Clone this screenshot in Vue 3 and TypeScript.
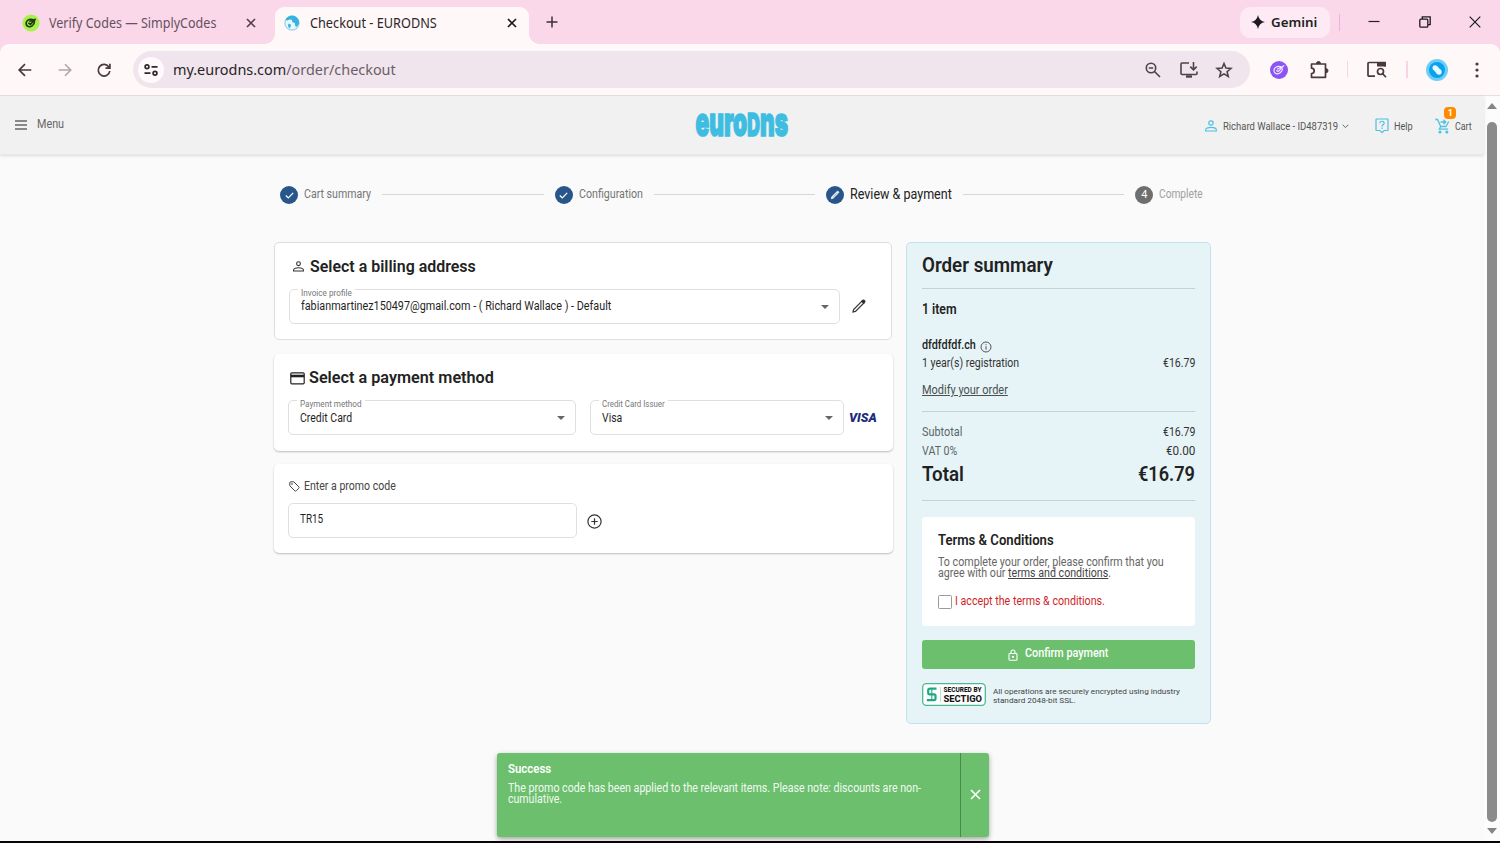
<script setup lang="ts">
import { ref } from 'vue'

// Condenses a line of text to the given width in pixels.
const vFit = {
  mounted(el: HTMLElement, binding: { value: number }) {
    const natural = el.offsetWidth
    el.style.transform = `scaleX(${binding.value / natural})`
    el.style.marginRight = `${binding.value - natural}px`
  },
}

const steps = [
  { label: 'Cart summary', width: 67, kind: 'done' },
  { label: 'Configuration', width: 64, kind: 'done' },
  { label: 'Review & payment', width: 102, kind: 'current' },
  { label: 'Complete', width: 44, kind: 'todo' },
]
const accepted = ref(false)
</script>

<template>
  <div class="window">
    <div class="tabstrip">
      <div class="tab first">
        <svg class="fav" width="18" height="18" viewBox="0 0 18 18">
          <circle cx="9" cy="9" r="8.6" fill="#a6f24a" />
          <g fill="none" stroke="#213a12" stroke-width="1.7" stroke-linecap="round">
            <path d="M10.5 5.6C7 4.6 4 6.600 4.100 9.600c.1 3 3.600 4 6 2.300 1.800-1.200 2.400-3 2.300-4.300" />
            <path d="M6.800 9.300l1.600 1 4.800-5M8 7.300l4-1.600" />
          </g>
        </svg>
        <span class="t title" v-fit="167">Verify Codes — SimplyCodes</span>
        <svg class="close" width="10" height="10" viewBox="0 0 10 10"><path d="M1 1l8 8M9 1l-8 8" stroke="#513b48" stroke-width="1.6" /></svg>
      </div>
      <div class="tab active">
        <svg class="fav" width="16" height="16" viewBox="0 0 16 16">
          <circle cx="8" cy="8" r="7.100" fill="#e9f7fc" stroke="#55bfe3" stroke-width=".8" />
          <path d="M1.500 5C3 1.500 6 .4 9 .8c4 .6 6.500 4 6 7.700l-2 3.200-1.700-.4-.5-3.200-2.400-.8-.6-2.600-2.400-.3-2 1.200z" fill="#36b2dd" />
          <path d="M4.500 8.500l2.600 1.300-.6 2.200-1.300 1.600-1.200-2.600z" fill="#36b2dd" />
        </svg>
        <span class="t title dark" v-fit="127">Checkout - EURODNS</span>
        <svg class="close" width="10" height="10" viewBox="0 0 10 10"><path d="M1 1l8 8M9 1l-8 8" stroke="#1f1a1d" stroke-width="1.700" /></svg>
      </div>
      <svg class="plus" width="12" height="12" viewBox="0 0 12 12"><path d="M6 .5v11M.5 6h11" stroke="#3c3038" stroke-width="1.500" /></svg>
      <div class="gemini">
        <svg width="14" height="14" viewBox="0 0 14 14"><path d="M7 0c.8 4 3 6.200 7 7-4 .8-6.200 3-7 7-.8-4-3-6.200-7-7 4-.8 6.200-3 7-7z" fill="#1c1b1f" /></svg>
        <span class="t" v-fit="46">Gemini</span>
      </div>
      <i class="sep"></i>
      <div class="controls">
        <svg width="12" height="12" viewBox="0 0 12 12"><path d="M.5 5.500h11" stroke="#222" stroke-width="1.200" /></svg>
        <svg width="12" height="12" viewBox="0 0 12 12" fill="none" stroke="#1b1b1b" stroke-width="1.300"><rect x=".8" y="3.200" width="8" height="8" rx="1" /><path d="M3.300 3V.8h7.900v7.900H9" /></svg>
        <svg width="12" height="12" viewBox="0 0 12 12"><path d="M.7.700l10.600 10.600M11.300.700L.7 11.300" stroke="#1b1b1b" stroke-width="1.200" /></svg>
      </div>
    </div>

    <div class="toolbar">
      <div class="nav">
        <svg width="14" height="14" viewBox="0 0 14 14" fill="none" stroke="#48383f" stroke-width="1.700"><path d="M13.300 7H1.500M7 1.200L1.200 7 7 12.800" /></svg>
        <svg width="14" height="14" viewBox="0 0 14 14" fill="none" stroke="#b0a6aa" stroke-width="1.600"><path d="M.7 7h11.800M7 1.200L12.800 7 7 12.800" /></svg>
        <svg width="14" height="14" viewBox="0 0 14 14" fill="none" stroke="#48383f" stroke-width="1.700"><path d="M12 4.200A5.800 5.800 0 1 0 12.800 8M12.900.8v4.400H8.500" /></svg>
      </div>
      <div class="omnibox">
        <span class="site">
          <svg width="14" height="12" viewBox="0 0 14 12" fill="none" stroke="#2f282c" stroke-width="1.700"><circle cx="3" cy="2.800" r="1.900" /><path d="M7.500 2.800h6M.5 9.200h6" /><circle cx="11" cy="9.200" r="1.900" /></svg>
        </span>
        <span class="t url" v-fit="223">my.eurodns.com<span class="path">/order/checkout</span></span>
        <div class="omni-icons">
          <svg width="16" height="16" viewBox="0 0 16 16" fill="none" stroke="#514149" stroke-width="1.600"><circle cx="6" cy="6" r="4.700" /><path d="M9.500 9.500l5.500 5.500M3.800 6h4.400" /></svg>
          <svg width="18" height="16" viewBox="0 0 18 16" fill="none" stroke="#514149" stroke-width="1.600"><path d="M9 1H2a1 1 0 0 0-1 1v9.500a1 1 0 0 0 1 1h14a1 1 0 0 0 1-1V9.500M13.500 0v7.500M10.300 4.600l3.200 3.200 3.200-3.200" /><path d="M6 14.500h6" stroke-width="2.400" /></svg>
          <svg width="16" height="16" viewBox="0 0 16 16" fill="none" stroke="#514149" stroke-width="1.600"><path d="M8 1.500l1.900 4.600 5 .4-3.800 3.200 1.200 4.800L8 11.900l-4.300 2.600 1.200-4.800L1.100 6.500l5-.4z" /></svg>
        </div>
      </div>
      <svg class="ext" width="18" height="18" viewBox="0 0 18 18"><circle cx="9" cy="9" r="9" fill="#8c55f3" /><g fill="none" stroke="#f1e8ff" stroke-width="1.200" stroke-linecap="round"><path d="M10.500 5.600C7 4.600 3.700 6.800 3.900 9.800c.2 3 4 3.800 6.300 2 1.700-1.200 2.300-2.600 2.200-4" /><path d="M6.600 9.600l1.800.9 5.400-5.800M7.500 8l4.500-2.300" /></g></svg>
      <svg class="puzzle" width="18" height="18" viewBox="0 0 18 18"><path d="M1.500 3h14v13.300h-14v-3.800a2.700 2.700 0 0 0 0-5.400z" fill="none" stroke="#48383f" stroke-width="1.700" stroke-linejoin="round" /><path d="M6.500 2.500a2 2 0 0 1 4 0zM16 7.700a2 2 0 0 1 0 4z" fill="#48383f" stroke="#48383f" /></svg>
      <i class="sep light s1"></i>
      <svg class="panel" width="20" height="17" viewBox="0 0 20 17"><path d="M8 15.200H2a1 1 0 0 1-1-1V2.500a1 1 0 0 1 1-1h16v4" fill="none" stroke="#48383f" stroke-width="1.700" /><path d="M10 1.200h9v4.300h-9z" fill="#48383f" /><circle cx="13.500" cy="10.500" r="3" fill="none" stroke="#48383f" stroke-width="1.700" /><path d="M15.700 12.700l3.300 3.600" stroke="#48383f" stroke-width="1.700" /></svg>
      <i class="sep light s2"></i>
      <svg class="avatar" width="22" height="22" viewBox="0 0 22 22"><circle cx="11" cy="11" r="11" fill="#70cdf8" /><circle cx="11" cy="11" r="8" fill="#08a2ef" /><g fill="#e7f8ff"><circle cx="9" cy="8.800" r="2.500" /><circle cx="13" cy="13" r="2.700" /><path d="M7.200 10.500l3.800 4.300 4-3.600-4-4.300z" /></g></svg>
      <svg class="dots" width="4" height="16" viewBox="0 0 4 16" fill="#48383f"><circle cx="2" cy="2" r="1.600" /><circle cx="2" cy="8" r="1.600" /><circle cx="2" cy="14" r="1.600" /></svg>
    </div>

    <div class="viewport">
      <div class="page">
        <header class="site-header">
          <div class="menu">
            <svg width="12" height="10" viewBox="0 0 12 10"><path d="M0 1h12M0 5h12M0 9h12" stroke="#666" stroke-width="1.300" /></svg>
            <span class="t" v-fit="27">Menu</span>
          </div>
          <svg class="logo" width="96" height="28" viewBox="0 0 96 28">
            <text class="logo-text" x="1.500" y="24.500" textLength="92.500" lengthAdjust="spacingAndGlyphs">euro<tspan class="cap">D</tspan>ns</text>
          </svg>
          <div class="account">
            <svg width="12" height="12" viewBox="0 0 12 12" fill="none" stroke="#4cc0e3" stroke-width="1.200"><circle cx="6" cy="3" r="2.200" /><path d="M.7 11V9.700C.7 8 4 7.300 6 7.300s5.300.7 5.300 2.400V11z" /></svg>
            <span class="t who" v-fit="115">Richard Wallace - ID487319</span>
            <svg class="chev" width="7" height="5" viewBox="0 0 7 5"><path d="M.7.8l2.800 2.800L6.300.8" fill="none" stroke="#666" /></svg>
            <svg class="help-icon" width="14" height="16" viewBox="0 0 14 16" fill="none" stroke="#4cc0e3" stroke-width="1.200"><path d="M1.500 1h11q.5 0 .5.500v10.500q0 .5-.5.500H9L7 14.700 5 12.500H1.500Q1 12.500 1 12V1.500Q1 1 1.500 1z" /><path d="M4.900 5.200c0-2.600 4.200-2.600 4.200 0 0 1.500-2.100 1.700-2.100 3.300M7 9.600v1.400" /></svg>
            <span class="t help" v-fit="19">Help</span>
            <div class="cart">
              <svg width="15" height="16" viewBox="0 0 15 16" fill="none" stroke="#4cc0e3" stroke-width="1.300"><path d="M.3 1.500h2.200l3.200 7h5.200l2.800-5M5.700 8.500l-1.300 2.700h8.700M5.500 4h5M8.500 1.800L10.700 4 8.500 6.200" /><circle cx="5" cy="14" r=".9" fill="#4cc0e3" /><circle cx="11.800" cy="14" r=".9" fill="#4cc0e3" /></svg>
              <span class="badge">1</span>
            </div>
            <span class="t" v-fit="17">Cart</span>
          </div>
        </header>

        <div class="stepper">
          <template v-for="(step, i) in steps" :key="step.label">
            <i v-if="i > 0" class="rail"></i>
            <div class="step" :class="step.kind">
              <span class="dot">
                <svg v-if="step.kind === 'done'" width="9" height="7" viewBox="0 0 9 7"><path d="M.8 3.500l2.500 2.400L8.200.9" fill="none" stroke="#fff" stroke-width="1.300" /></svg>
                <svg v-else-if="step.kind === 'current'" width="10" height="10" viewBox="0 0 10 10"><path d="M1.200 8.800l.5-2L7 1.500a1 1 0 0 1 1.500 1.500L3.200 8.300z" fill="#e8f1fa" stroke="#fff" stroke-width=".6" /><path d="M3 7.200l4-4" stroke="#7b9cba" stroke-width=".6" /></svg>
                <span v-else>4</span>
              </span>
              <span class="t" v-fit="step.width">{{ step.label }}</span>
            </div>
          </template>
        </div>

        <main class="columns">
          <div class="forms">
            <section class="card outlined">
              <h2>
                <svg class="i-person" width="11" height="11" viewBox="0 0 11 11" fill="none" stroke="#333" stroke-width="1.100"><circle cx="5.500" cy="2.700" r="1.900" /><path d="M.6 10V9c0-1.500 3-2.300 4.900-2.300s4.900.8 4.900 2.300v1z" /></svg>
                <span class="t" v-fit="166">Select a billing address</span>
              </h2>
              <div class="row">
                <div class="field invoice">
                  <label><span class="t" v-fit="51">Invoice profile</span></label>
                  <span class="t" v-fit="310">fabianmartinez150497@gmail.com - ( Richard Wallace ) - Default</span>
                  <i class="caret"></i>
                </div>
                <svg class="pencil" width="14" height="14" viewBox="0 0 14 14" fill="none" stroke="#333" stroke-width="1.200"><path d="M1 13l.6-2.500L10 2.100l1.900 1.900-8.400 8.400z" /><path d="M9.800 2.300l1-1q.6-.5 1.200 0l.7.7q.5.600 0 1.200l-1 1z" fill="#222" /></svg>
              </div>
            </section>

            <section class="card raised method">
              <h2>
                <svg class="i-card" width="15" height="13" viewBox="0 0 15 13"><rect x=".8" y=".8" width="13.400" height="11" rx="1" fill="none" stroke="#222" stroke-width="1.200" /><path d="M.8 4h13.400" stroke="#222" stroke-width="2.600" /></svg>
                <span class="t" v-fit="185">Select a payment method</span>
              </h2>
              <div class="row">
                <div class="field pay">
                  <label><span class="t" v-fit="62">Payment method</span></label>
                  <span class="t" v-fit="52">Credit Card</span>
                  <i class="caret"></i>
                </div>
                <div class="field issuer">
                  <label><span class="t" v-fit="63">Credit Card Issuer</span></label>
                  <span class="t" v-fit="20">Visa</span>
                  <i class="caret"></i>
                </div>
                <span class="t visa" v-fit="28">VISA</span>
              </div>
            </section>

            <section class="card raised promo">
              <div class="promo-title">
                <svg width="11" height="11" viewBox="0 0 11 11" fill="none" stroke="#444"><path d="M.8 1.800Q.8.800 1.800.8h3l5 5q.7.700 0 1.400L7.200 9.800q-.7.700-1.400 0l-5-5z" /><circle cx="3" cy="3" r=".4" /></svg>
                <span class="t" v-fit="92">Enter a promo code</span>
              </div>
              <div class="row">
                <div class="field code"><span class="t" v-fit="23">TR15</span></div>
                <svg class="add" width="15" height="15" viewBox="0 0 15 15" fill="none" stroke="#333" stroke-width="1.200"><circle cx="7.500" cy="7.500" r="6.600" /><path d="M7.500 4.300v6.400M4.300 7.500h6.400" /></svg>
              </div>
            </section>
          </div>

          <aside class="summary">
            <h1><span class="t" v-fit="131">Order summary</span></h1>
            <hr />
            <div class="items"><span class="t" v-fit="35">1 item</span></div>
            <div class="domain">
              <span class="t" v-fit="54">dfdfdfdf.ch</span>
              <svg width="12" height="12" viewBox="0 0 12 12" fill="none" stroke="#555"><circle cx="6" cy="6" r="5" /><path d="M6 5.200v3.500M6 3.200v1" /></svg>
            </div>
            <div class="line reg"><span class="t" v-fit="97">1 year(s) registration</span><span class="t" v-fit="32">€16.79</span></div>
            <div class="line modify"><a class="t" v-fit="86">Modify your order</a></div>
            <hr class="h2" />
            <div class="line sub"><span class="t" v-fit="40">Subtotal</span><span class="t strong" v-fit="32">€16.79</span></div>
            <div class="line vat"><span class="t" v-fit="35">VAT 0%</span><span class="t strong" v-fit="29">€0.00</span></div>
            <div class="line total"><span class="t" v-fit="42">Total</span><span class="t" v-fit="57">€16.79</span></div>
            <hr class="h3" />
            <div class="terms">
              <h3><span class="t" v-fit="116">Terms &amp; Conditions</span></h3>
              <p><span class="t" v-fit="226">To complete your order, please confirm that you</span></p>
              <p><span class="t" v-fit="173">agree with our <a>terms and conditions</a>.</span></p>
              <label class="accept">
                <input v-model="accepted" type="checkbox" />
                <span class="t" v-fit="150">I accept the terms &amp; conditions.</span>
              </label>
            </div>
            <button class="confirm">
              <svg width="10" height="12" viewBox="0 0 10 12" fill="none" stroke="#fff" stroke-width="1.100"><rect x="1" y="4.500" width="8" height="6.700" rx=".8" /><path d="M3 4.500V3a2 2 0 0 1 4 0v1.500" /><circle cx="5" cy="7.800" r=".6" fill="#fff" /></svg>
              <span class="t" v-fit="83">Confirm payment</span>
            </button>
            <div class="secure">
              <svg width="64" height="23" viewBox="0 0 64 23">
                <rect x=".7" y=".7" width="62.600" height="21.600" rx="3.500" fill="#fff" stroke="#4bb98f" stroke-width="1.300" />
                <path d="M14.500 5.700H8q-1.800 0-1.800 1.800v2.300q0 1.600 1.600 1.600h4.300q1.400 0 1.400 1.400v2.800q0 1.500-1.500 1.500H4.900" fill="none" stroke="#1cab7e" stroke-width="2.200" />
                <path d="M9.800 5.700v5.700M9.800 11.400v5.700" fill="none" stroke="#1cab7e" stroke-width="1.100" />
                <path d="M18.500 4v15" stroke="#b9e5d5" />
                <g class="seal"><text x="21.500" y="9.200" font-size="6.600" textLength="38" lengthAdjust="spacingAndGlyphs">SECURED BY</text><text x="21.500" y="18.700" font-size="9.500" textLength="38.500" lengthAdjust="spacingAndGlyphs">SECTIGO</text></g>
              </svg>
              <div class="fine">
                <p><span class="t" v-fit="187">All operations are securely encrypted using industry</span></p>
                <p><span class="t" v-fit="83">standard 2048-bit SSL.</span></p>
              </div>
            </div>
          </aside>
        </main>

        <div class="toast">
          <div class="msg">
            <h4><span class="t" v-fit="43">Success</span></h4>
            <p><span class="t" v-fit="413">The promo code has been applied to the relevant items. Please note: discounts are non-</span></p>
            <p><span class="t" v-fit="54">cumulative.</span></p>
          </div>
          <div class="dismiss">
            <svg width="11" height="11" viewBox="0 0 11 11"><path d="M1 1l9 9M10 1l-9 9" stroke="#fff" stroke-width="1.600" /></svg>
          </div>
        </div>
      </div>
      <div class="scrollbar">
        <i class="up"></i>
        <i class="thumb"></i>
        <i class="down"></i>
      </div>
    </div>
    <div class="edge"></div>
  </div>
</template>

<style>
body {
  margin: 0;
  overflow: hidden;
}
</style>

<style scoped>
.window {
  width: 1500px;
  height: 843px;
  display: flex;
  flex-direction: column;
  background: #fad8e9;
  font-family: Roboto, "Liberation Sans", sans-serif;
  color: #222;
  overflow: hidden;
}
svg { display: block; flex: none; overflow: visible; }
h1, h2, h3, h4, p { margin: 0; font-weight: 400; }
.t {
  display: inline-block;
  white-space: nowrap;
  transform-origin: 0 50%;
  flex: none;
}

/* Tab strip */
.tabstrip {
  height: 44px;
  flex: none;
  display: flex;
  align-items: center;
  font-family: "Noto Sans", "Open Sans", sans-serif;
}
.tab { display: flex; align-items: center; height: 37px; margin-top: 7px; padding-bottom: 5px; box-sizing: border-box; }
.first { width: 275px; padding-left: 22px; }
.first .title { margin-left: 9px; }
.first .close { margin-left: auto; margin-right: 19px; }
.title { font-size: 13.5px; line-height: 20px; color: #66505d; }
.title.dark { color: #2c2529; }
.active {
  position: relative;
  width: 254px;
  padding-left: 10px;
  background: #fff8f8;
  border-radius: 9px 9px 0 0;
}
.active::before, .active::after {
  content: "";
  position: absolute;
  bottom: 0;
  width: 10px;
  height: 10px;
}
.active::before { left: -10px; background: radial-gradient(circle at 0 0, transparent 9.5px, #fff8f8 10px); }
.active::after { right: -10px; background: radial-gradient(circle at 100% 0, transparent 9.5px, #fff8f8 10px); }
.active .fav { margin-left: -1px; }
.active .title { margin-left: 10px; }
.active .close { margin-left: auto; margin-right: 12px; }
.plus { margin-left: 17px; }
.gemini {
  display: flex;
  align-items: center;
  gap: 6px;
  width: 90px;
  height: 31px;
  margin-left: auto;
  padding-left: 11px;
  box-sizing: border-box;
  border-radius: 10px;
  background: #fdeaf4;
  font-size: 13px;
  font-weight: 600;
}
.sep { width: 1.5px; height: 17px; margin-left: 9px; background: #f3b0dc; }
.controls { display: flex; gap: 38.500px; margin: 0 19px 0 28px; }

/* Toolbar */
.toolbar {
  height: 51px;
  flex: none;
  display: flex;
  align-items: center;
  background: #fff8f8;
  border-radius: 9px 9px 0 0;
  border-bottom: 1px solid #eadfe0;
}
.nav { display: flex; gap: 25.500px; margin-left: 18px; width: 115px; }
.omnibox {
  display: flex;
  align-items: center;
  width: 1117px;
  height: 37px;
  border-radius: 19px;
  background: #f0e5ed;
}
.site {
  display: grid;
  place-items: center;
  width: 26px;
  height: 26px;
  margin-left: 5px;
  border-radius: 50%;
  background: #fff9fb;
}
.url { margin: -2px 0 0 9px; font: 15px/20px "Noto Sans", "Open Sans", sans-serif; color: #2a2327; }
.path { color: #6b5d65; }
.omni-icons { display: flex; align-items: center; gap: 18.500px; margin-left: auto; margin-right: 18px; }
.ext { margin-left: 19.500px; }
.puzzle { margin-left: 22px; }
.light { background: #fbd3e6; }
.s1 { margin-left: 19px; }
.panel { margin-left: 19px; }
.s2 { margin-left: 19px; }
.avatar { margin-left: 18px; }
.dots { margin-left: 27px; }

/* Page */
.viewport { flex: 1; display: flex; min-height: 0; }
.page { position: relative; width: 1484px; background: #fafafa; }
.site-header {
  display: grid;
  grid-template-columns: 1fr auto 1fr;
  align-items: center;
  height: 58px;
  background: #f1f1f1;
  border-bottom: 1px solid #e8e8e8;
  box-shadow: 0 1px 3px #0000001f;
}
.menu { display: flex; align-items: center; gap: 10px; padding-left: 15px; font-size: 12px; line-height: 16px; color: #666; }
.menu .t { margin-top: -3px; }
.logo-text { font-family: Inter, sans-serif; font-size: 40px; font-weight: 900; fill: #3fbde0; stroke: #3fbde0; stroke-width: 1.600; }
.cap { font-size: 31px; }
.account { display: flex; align-items: center; justify-content: flex-end; padding: 2px 12px 0 0; font-size: 11.500px; line-height: 16px; color: #555; }
.who { margin-left: 6px; }
.chev { margin-left: 4px; }
.help-icon { margin-left: 26px; }
.help { margin-left: 5px; }
.cart { position: relative; margin: 0 5px 0 23px; }
.badge {
  position: absolute;
  left: 9px;
  top: -11px;
  width: 12px;
  height: 12px;
  border-radius: 4px;
  background: #ff8a00;
  color: #fff;
  font-size: 9px;
  font-weight: 700;
  line-height: 12px;
  text-align: center;
}

/* Stepper */
.stepper { display: flex; align-items: center; height: 20px; margin: 30px 281px 0 280px; }
.step { display: flex; align-items: center; flex: none; font-size: 12.500px; line-height: 16px; color: #757575; }
.step .t { margin: -2px 0 0 6px; }
.step.current { font-size: 14px; color: #222; }
.step.todo { color: #a0a0a0; }
.dot {
  display: grid;
  place-items: center;
  width: 18px;
  height: 18px;
  border-radius: 50%;
  background: #28568a;
}
.todo .dot { background: #6e6e6e; color: #fff; font-size: 11px; }
.rail { flex: 1; height: 1px; margin: -2px 11px 0; background: #d6d6d6; }

.columns { display: flex; align-items: flex-start; gap: 14px; margin: 37px 0 0 274px; }
.forms { width: 618px; }
.card { box-sizing: border-box; background: #fff; border-radius: 5px; }
.outlined { height: 98px; padding: 13px 14px; border: 1px solid #dedede; }
.raised { width: 619px; padding: 13px 14px; box-shadow: 0 1px 2px #00000040; }
.method { height: 97px; margin-top: 14px; }
.promo { height: 89px; margin-top: 13px; padding-top: 14px; }
h2 { display: flex; align-items: center; height: 20px; line-height: 20px; font-size: 17px; font-weight: 600; }
.i-person { margin: 0 6px 0 4px; }
.i-card { margin: 2px 4px 0 2px; }
.row { display: flex; align-items: center; margin-top: 13px; }
.field {
  position: relative;
  box-sizing: border-box;
  height: 35px;
  flex: none;
  padding: 8px 11px 0;
  border: 1px solid #dfdfdf;
  border-radius: 5px;
  font-size: 12.500px;
  line-height: 16px;
  color: #1f1f1f;
}
.field label {
  position: absolute;
  top: -2.500px;
  left: 8px;
  padding: 0 3px;
  display: flex;
  background: #fff;
  font-size: 8.500px;
  line-height: 10px;
  color: #777;
}
.invoice { width: 551px; }
.method .field { padding-top: 9px; }
.pay { width: 288px; margin-right: 14px; }
.issuer { width: 254px; }
.caret {
  position: absolute;
  right: 10.500px;
  top: 15px;
  border: 4px solid transparent;
  border-top-color: #666;
  border-bottom: 0;
}
.pencil { margin: -2px 0 0 12px; }
.visa { margin-left: 5px; font-size: 13.500px; line-height: 16px; font-weight: 900; font-style: italic; color: #1a2c7c; }
.method .visa { margin-top: -2px; }
.promo-title { display: flex; align-items: center; gap: 4px; height: 16px; padding-left: 1px; font-size: 12.500px; line-height: 16px; color: #444; }
.promo .row { margin-top: 9px; }
.code { width: 289px; padding-top: 7px; }
.add { margin: 1px 0 0 10px; }

/* Order summary */
.summary {
  box-sizing: border-box;
  width: 305px;
  height: 482px;
  padding: 10px 15px 0;
  border: 1px solid #bfe2ee;
  border-radius: 5px;
  background: #e6f4f7;
}
h1 { height: 24px; font-size: 20.500px; line-height: 24px; font-weight: 600; }
hr { height: 1px; margin: 11px 0 12px; border: 0; background: #c3d2d4; }
.items { height: 16px; font-size: 14px; line-height: 16px; font-weight: 600; }
.domain { display: flex; align-items: center; gap: 4px; height: 16px; margin-top: 20px; font-size: 13px; line-height: 16px; font-weight: 500; }
.domain svg { margin-top: 3px; }
.line { display: flex; justify-content: space-between; height: 16px; font-size: 12.500px; line-height: 16px; color: #4a4f50; }
.reg { margin-top: 2px; color: #333; }
.modify { margin-top: 11px; }
.modify a { text-decoration: underline; }
.h2 { margin-top: 13px; }
.sub, .vat { color: #5d6466; }
.strong { color: #333; }
.vat { margin-top: 3px; }
.total { height: 24px; margin-top: 3px; font-size: 21px; line-height: 24px; font-weight: 600; color: #1f2222; }
.h3 { margin: 14px 0 16px; }
.terms { box-sizing: border-box; height: 109px; padding: 15px 16px 0; border-radius: 4px; background: #fff; }
h3 { height: 16px; margin-bottom: 8px; font-size: 14px; line-height: 16px; font-weight: 600; }
.terms p { height: 11px; font-size: 12.500px; line-height: 11px; color: #666; }
.terms a { color: #444; text-decoration: underline; }
.accept { display: flex; align-items: center; height: 16px; margin-top: 16px; font-size: 12.500px; line-height: 16px; color: #cf1f28; }
.accept .t { margin-top: -2px; }
.accept input {
  appearance: none;
  width: 14px;
  height: 14px;
  margin: 0 3px 0 0;
  border: 1px solid #9a9a9a;
  border-radius: 1.500px;
  background: #fff;
}
.confirm {
  display: flex;
  justify-content: center;
  align-items: center;
  gap: 7px;
  width: 273px;
  height: 29px;
  margin: 14px 0;
  padding: 0;
  border: 0;
  border-radius: 3px;
  background: #6bbf6d;
  color: #fff;
  font: 500 12.500px/16px Roboto, sans-serif;
}
.confirm .t { margin-top: -3px; }
.secure { display: flex; gap: 7px; }
.seal { font-family: Roboto, sans-serif; font-weight: 800; fill: #161616; }
.fine { padding-top: 5px; font-size: 8px; color: #444; }
.fine p { height: 8.500px; line-height: 8.500px; }

/* Toast */
.toast {
  position: absolute;
  left: 497px;
  top: 657px;
  display: flex;
  width: 492px;
  height: 84px;
  border-radius: 3px;
  background: #6bbf6d;
  box-shadow: 0 2px 5px #00000059;
  color: #fff;
}
.msg { flex: 1; padding: 8px 11px; font-size: 12.500px; }
h4 { height: 16px; margin-bottom: 5px; font-size: 12.500px; line-height: 16px; font-weight: 600; }
.msg p { height: 11px; line-height: 11px; color: #f2fbf2; }
.dismiss { display: grid; place-items: center; width: 29px; padding-bottom: 2px; box-sizing: border-box; border-left: 1px solid #488a4b; }

/* Scrollbar */
.scrollbar { display: flex; flex-direction: column; align-items: center; width: 16px; background: #fcfcfc; }
.up, .down { border: 5px solid transparent; }
.up { margin-top: 7px; border-top: 0; border-bottom: 6px solid #858585; }
.thumb { width: 10px; height: 700px; margin-top: 13px; border-radius: 5px; background: #8b8b8b; }
.down { margin-top: 6px; border-bottom: 0; border-top: 6px solid #858585; }
.edge { height: 2px; flex: none; background: #050505; }
</style>
